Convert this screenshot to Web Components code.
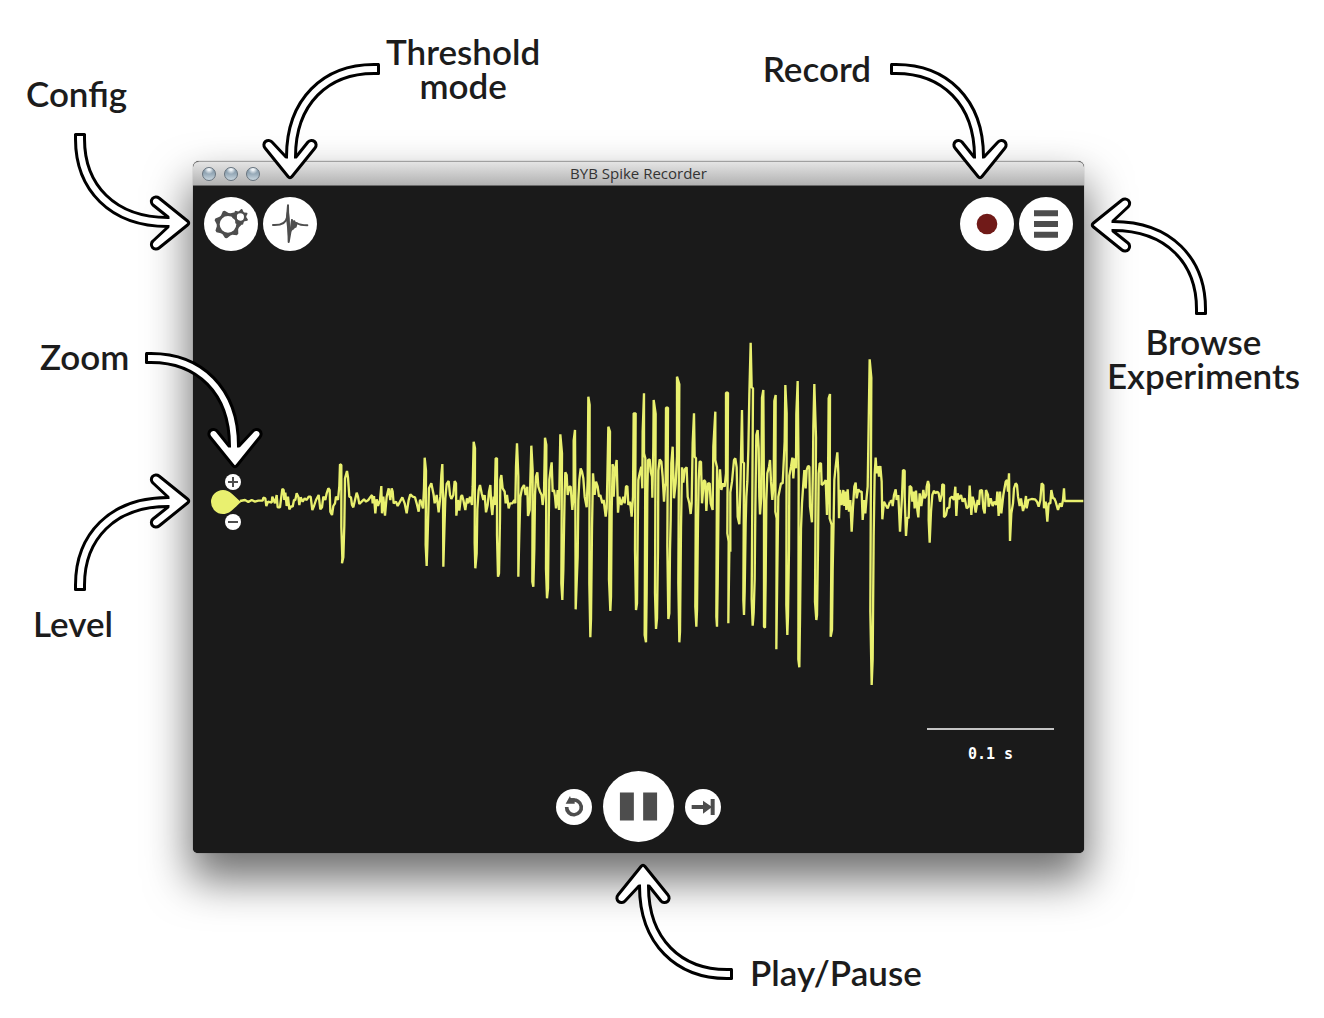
<!DOCTYPE html>
<html lang="en">
<head>
<meta charset="utf-8">
<title>BYB Spike Recorder guide</title>
<style>
  body { margin: 0; background: #fff; }
</style>
</head>
<body>
<recorder-guide></recorder-guide>

<script>
const sheet = (css, html) => {
  const t = document.createElement('template');
  t.innerHTML = `<style>*{box-sizing:border-box}${css}</style>${html}`;
  return t;
};
class Base extends HTMLElement {
  constructor() {
    super();
    this.attachShadow({ mode: 'open' }).append(this.constructor.template.content.cloneNode(true));
  }
}

/* Curved outlined arrow. Base pose: tip down, tail to the upper right. */
class CurveArrow extends Base {
  static template = sheet(`
    :host { display: block; width: 120px; height: 120px; pointer-events: none; }
    svg { display: block; width: 100%; height: 100%; overflow: visible; }
    :host([pose="down-left"]) svg { transform: scaleX(-1); }
    :host([pose="up"]) svg { transform: scaleY(-1); }
    :host([pose="right"]) svg { transform: rotate(-90deg); }
    :host([pose="right-up"]) svg { transform: scaleY(-1) rotate(-90deg); }
    :host([pose="left"]) svg { transform: rotate(90deg); }
  `, `<svg viewBox="-28 -118 120 120" aria-hidden="true" fill="none">
    <path d="M89-110H84C36-110 1-78 1-22" stroke="#000" stroke-width="12"/>
    <path d="M88.500-114.500V-105.500" stroke="#000" stroke-width="3" stroke-linecap="round"/>
    <path d="M-2-2.500-25-31A4.600 4.600 0 0 1-18-37L-4-22H6L18-37A4.600 4.600 0 0 1 25-31L2-2.500Q0 0-2-2.500Z" fill="#fff" stroke="#000" stroke-width="3" stroke-linejoin="round"/>
    <path d="M87-110H84C36-110 1-78 1-22V-12" stroke="#fff" stroke-width="6"/>
  </svg>`);
}
customElements.define('curve-arrow', CurveArrow);

class CalloutLabel extends Base {
  static template = sheet(`
    :host { display: block; font: 600 35px/34px Lato, "Open Sans", sans-serif; color: #1c1c1c; text-align: center; white-space: nowrap; }
  `, `<slot></slot>`);
}
customElements.define('callout-label', CalloutLabel);

class RoundButton extends Base {
  static template = sheet(`
    :host { display: block; width: var(--size, 54px); height: var(--size, 54px); }
    button { display: block; width: 100%; height: 100%; padding: 0; border: 0; border-radius: 50%; background: #fff; color: #4d4d4d; cursor: pointer; }
    ::slotted(svg) { display: block; width: 100%; height: 100%; }
  `, `<button type="button"><slot></slot></button>`);
  connectedCallback() {
    this.shadowRoot.querySelector('button').setAttribute('aria-label', this.getAttribute('label'));
  }
}
customElements.define('round-button', RoundButton);

/* Ring with pointed teeth and a round hole. */
const gear = (cx, cy, outer, inner, hole, teeth, turn) => {
  const at = (r, deg) => {
    const a = deg * Math.PI / 180;
    return `${(cx + r * Math.cos(a)).toFixed(1)} ${(cy + r * Math.sin(a)).toFixed(1)}`;
  };
  const step = 360 / teeth, pts = [];
  for (let i = 0; i < teeth; i++) {
    const a = turn + i * step;
    pts.push(at(outer, a - step * .08), at(outer, a + step * .08), at(inner, a + step * .4), at(inner, a + step * .6));
  }
  return `M${pts.join('L')}ZM${cx - hole} ${cy}a${hole} ${hole} 0 1 0 ${2 * hole} 0a${hole} ${hole} 0 1 0 ${-2 * hole} 0Z`;
};

class LevelHandle extends Base {
  static template = sheet(`
    :host { display: flex; flex-direction: column; align-items: flex-end; width: 30px; }
    round-button { --size: 16px; }
    svg.drop { display: block; width: 30px; height: 24px; }
  `, `
    <round-button label="Zoom in"><svg viewBox="-8 -8 16 16"><path d="M-5 0H5M0-5V5" stroke="currentColor" stroke-width="2"/></svg></round-button>
    <svg class="drop" viewBox="0 0 30 24" role="img" aria-label="Level"><path d="M12 0C19 0 22 5 30 12 22 19 19 24 12 24a12 12 0 0 1 0-24Z" fill="#e9f06f"/></svg>
    <round-button label="Zoom out"><svg viewBox="-8 -8 16 16"><path d="M-5 0H5" stroke="currentColor" stroke-width="2"/></svg></round-button>
  `);
}
customElements.define('level-handle', LevelHandle);

/* Sampled trace, drawn in chunks of three units per screen pixel. */
const TRACE = [
  [240, 400, `0,303 15,300 25,306 35,300 45,305 55,302 68,302 70,293 76,295 79,318 84,305 95,308 97,290 105,310 110,285 113,322 120,322 124,290 127,267 131,270 133,300 136,278 140,318 144,290 148,328 154,318 158,320 162,300 166,300 170,280 175,290 178,315 182,292 188,305 194,295 200,300 206,290 212,290 217,330 222,318 228,300 236,285 241,328 246,322 250,290 256,300 260,280 265,265 269,270 271,335 276,345 280,318 285,310 288,290 294,300 298,258 300,193 304,195 304,380 307,475 306,490 310,472 313,375 315,235 321,213 324,232 328,290 333,292 336,315 340,322 345,300 350,278 354,290 358,312 365,305 372,298 378,305 385,300 392,290 396,285 398,310 402,288 406,340 410,298 414,318 420,300 424,258 426,340 430,290 435,347 440,290 446,265 451,300 455,265 458,275 461,310 468,305 473,318 480,305 487,292 494,310 500,340 506,300 511,283 518,290 525,292 530,310 536,335 540,300`],
  [420, 380, `0,358 5,370 9,385 12,325 14,233 18,272 17,495 20,558 22,500 27,325 34,310 38,330 41,345 44,370 50,345 56,397 61,350 64,285 67,252 69,355 70,560 73,455 76,355 80,312 86,303 90,345 94,357 100,345 104,303 108,310 109,407 114,360 118,392 123,350 126,345 130,360 136,390 141,355 145,370 150,350 156,375 158,320 161,185 165,205 164,488 166,565 170,520 172,388 176,330 180,315 185,340 190,360 194,345 198,397 203,375 207,335 211,315 214,380 217,405 221,350 224,375 227,235 231,235 231,465 234,590 237,580 240,415 241,300 244,285 248,325 254,335 257,370 261,345 266,385 270,370 277,370 283,360 286,370 288,260 291,190 295,290 295,590 298,460 301,352 306,325 312,315 317,345 322,320 324,408 329,390 331,300 334,197 338,272 337,605 340,620 343,505 345,345 348,290 352,277 355,320 360,335 365,345 368,375 372,340 375,173 379,195 378,568 381,655 384,625 386,437 388,300 391,275 395,247 398,335 402,330 405,350 408,385 413,330 417,390 421,163 426,220 424,610 427,660 430,570 434,335 436,277 440,285 443,345 448,320 452,320 457,390 461,345 461,182 465,150 466,350 467,688 473,530 475,360 478,300 482,265 486,275 490,295 494,350 500,382 503,300 505,50 509,75 508,610 511,772 513,718 516,445 519,280 524,345 528,305 533,320 537,350 541,345 547,370 551,360 557,410 560,385 562,300 565,140 570,155 567,598 571,693 573,650 575,395 578,252`],
  [600, 330, `38,405 43,425 41,500 45,420 50,390 54,548 58,500 64,525 70,500 74,520 78,470 82,468 85,525 90,515 95,560 99,500 101,250 107,250 105,660 108,840 111,820 113,620 115,450 119,430 124,410 127,475 128,305 132,190 132,370 136,385 134,915 138,937 140,785 142,490 144,390 149,388 152,425 156,440 157,503 160,350 161,210 167,252 165,790 168,897 171,865 174,662 175,422 179,388 184,395 188,440 192,515 195,470 197,460 198,233 204,233 202,650 205,867 208,850 210,660 212,570 214,400 218,350 222,505 227,460 231,380 231,140 238,163 235,760 238,937 240,905 243,595 246,412 250,458 254,418 260,412 263,500 268,520 272,552 275,520 278,340 282,250 284,380 288,385 286,830 289,890 291,840 294,570 296,450 299,395 303,395 306,520 312,450 316,455 319,543 324,460 329,460 332,520 338,540 340,350 346,245 346,390 351,412 349,860 351,890 353,765 356,480 360,418 364,480 369,460 374,470 378,430 378,188 384,188 382,610 386,635 385,880 388,665 391,665`],
  [730, 330, `1,665 1,487 6,455 12,390 16,385 20,412 23,560 28,583 31,480 33,378 36,240 38,395 42,400 40,810 42,855 44,785 47,580 49,500 52,455 55,360 58,195 62,38 65,172 69,175 65,808 68,887 71,848 74,748 76,540 79,315 83,300 86,355 88,500 90,553 94,500 96,203 100,180 102,515 102,890 105,893 107,750 109,510 112,430 117,410 120,390 123,455 127,510 131,460 133,213 137,195 136,545 140,565 139,958 142,720 145,500 149,480 153,460 158,460 160,420 164,335 166,165 170,250 169,825 172,915 174,858 177,655 178,437 183,410 187,383 190,445 194,385 198,415 199,252 203,153 206,445 205,988 208,1012 210,868 213,595 216,520 220,460 223,420 227,475 230,420 234,408 238,410 240,530 246,577 249,400 250,290 253,162 258,322 255,815 259,870 261,855 264,655 266,430 269,400 273,400 275,465 281,460 287,450 291,555 294,460 296,205 300,192 299,565 305,585 302,920 306,900 308,720 311,565 313,450 317,410 322,367 325,430 327,565 330,480 335,525 340,480 343,528 347,485 349,540 353,478 357,545 361,510 365,605 369,530 373,470 377,458 380,505 385,478 390,485 395,485 398,570 403,510 406,550 410,500 413,470 415,345 419,88 424,143 421,845 425,1065 428,988 431,617 434,432 437,383 440,430 444,408 447,440 451,408 455,455 457,568 462,515 467,525 473,535 480,515`],
  [860, 430, `90,215 96,212 98,228 102,195 107,178 110,210 115,195 120,305 126,200 129,120 134,122 134,200 138,318 142,262 146,265 149,168 154,172 157,215 161,185 164,235 168,182 172,240 175,262 179,190 184,228 190,180 194,205 199,195 200,170 204,153 207,165 206,270 209,338 213,245 217,195 222,182 226,190 232,185 236,190 240,215 245,195 247,163 252,165 252,262 258,255 262,235 268,232 270,205 276,200 282,210 286,170 289,258 293,190 297,208 303,195 308,215 314,205 320,235 326,230 329,167 334,255 338,200 343,220 347,248 353,210 357,225 360,182 366,180 370,235 374,250 378,180 384,195 386,230 392,205 398,228 403,215 409,225 412,185 416,258 420,185 424,250 430,195 437,155 441,150 444,185 447,130 450,333 454,250 459,220 462,175 467,160 471,165 474,200 479,228 483,205 489,243 494,225 498,198 500,235 505,210 515,207 525,208 531,215 536,230 541,210 545,160 550,165 552,235 557,215 562,275 566,220 571,220 574,180 579,205 583,205 587,215 594,240 600,220 605,230 609,210 612,175 614,213 670,213`]
];

class SpikeTrace extends Base {
  static template = sheet(`
    :host { display: block; position: relative; height: 477px; }
    svg.trace { display: block; width: 100%; height: 100%; }
    level-handle { position: absolute; left: 18px; top: 223px; }
  `, `
    <svg class="trace" viewBox="193 251 891 477" preserveAspectRatio="none" role="img" aria-label="Recorded signal" fill="none" stroke="#e9f06f" stroke-linejoin="bevel">
      ${TRACE.map(([x, y, p]) => `<g transform="translate(${x} ${y}) scale(.33333)"><polyline stroke-width="7" points="${p}"/></g>`).join('')}
    </svg>
    <level-handle></level-handle>
  `);
}
customElements.define('spike-trace', SpikeTrace);

class TimeScale extends Base {
  static template = sheet(`
    :host { display: block; width: 127px; height: 43px; border-top: 2px solid #c4c4c4; padding-top: 15px;
      font: bold 15px/18px "DejaVu Sans Mono", "Liberation Mono", monospace; color: #fff; text-align: center; }
  `, `<slot></slot>`);
}
customElements.define('time-scale', TimeScale);

class AppWindow extends Base {
  static template = sheet(`
    :host { display: flex; flex-direction: column; border-radius: 6px 6px 5px 5px; overflow: hidden; background: #1a1a1a;
      box-shadow: 0 24px 44px 3px rgba(0,0,0,.56), 0 0 1px rgba(0,0,0,.6); }
    header { display: grid; grid-template-columns: 1fr auto 1fr; align-items: center; height: 25px; padding: 0 9px;
      background: linear-gradient(#e4e4e4, #b2b2b2); border-top: 1px solid #a0a0a0; border-bottom: 1px solid #6a6a6a; border-radius: 6px 6px 0 0; }
    .lights { display: flex; gap: 8px; }
    .lights button { width: 14px; height: 14px; padding: 0; border: 1px solid #66727d; border-radius: 50%;
      background: radial-gradient(circle at 50% 10%, #eef3f7 0 10%, transparent 40%), linear-gradient(#7e93a3, #98abb9 50%, #c9d6df); }
    h1 { margin: 0; padding-bottom: 2px; font: 400 15px/20px "Open Sans", "Noto Sans", sans-serif; color: #333; }
  `, `
    <header>
      <div class="lights"><button type="button" aria-label="Close"></button><button type="button" aria-label="Minimize"></button><button type="button" aria-label="Zoom window"></button></div>
      <h1><slot name="title"></slot></h1>
    </header>
    <slot></slot>
  `);
}
customElements.define('app-window', AppWindow);

class RecorderView extends Base {
  static template = sheet(`
    :host { display: block; background: #1a1a1a; padding: 11px 0; }
    nav { display: flex; justify-content: space-between; padding: 0 11px; }
    .group { display: flex; gap: 5px; }
    .scale { display: flex; justify-content: flex-end; padding-right: 30px; }
    .controls { display: flex; justify-content: center; align-items: center; gap: 11px; }
    .controls round-button { --size: 36px; }
    .controls round-button.main { --size: 71px; }
  `, `
    <nav>
      <div class="group">
        <round-button label="Config"><svg viewBox="-81 -81 162 162"><path fill="currentColor" fill-rule="evenodd" d="${gear(-9, 1, 42, 34, 25, 7, 201)}"/><path fill="#fff" d="M17-21a11 11 0 1 0 22 0a11 11 0 1 0-22 0Z"/><path fill="currentColor" fill-rule="evenodd" d="${gear(28, -21, 24, 18, 11, 7, 280)}"/></svg></round-button>
        <round-button label="Threshold mode"><svg viewBox="-81 -81 162 162"><path fill="none" stroke="currentColor" stroke-width="6" stroke-linecap="round" stroke-linejoin="round" d="M-51 3C-30 4-12 0-9-20L-6-56-4 54 2 20 6-12 9 14 13-8 17 8 20-3C30 4 40 4 52 4"/><path fill="currentColor" d="M-12-18-6-58-1-18 1 18-4 56-8 18ZM3-14 12-10 20-4 16 12 12 14 8 18 2 24Z"/></svg></round-button>
      </div>
      <div class="group">
        <round-button label="Record"><svg viewBox="-81 -81 162 162"><circle r="31" fill="#701a18"/></svg></round-button>
        <round-button label="Browse experiments"><svg viewBox="-81 -81 162 162"><path fill="currentColor" d="M-36-41h72v18h-72zM-36-9h72V9h-72zM-36 23h72v18h-72z"/></svg></round-button>
      </div>
    </nav>
    <spike-trace></spike-trace>
    <div class="scale"><time-scale>0.1 s</time-scale></div>
    <div class="controls">
      <round-button label="Restart"><svg viewBox="-54 -54 108 108"><path fill="none" stroke="currentColor" stroke-width="11" d="M-22 0A22 22 0 1 0-6-20"/><path fill="currentColor" d="M-25-10-12-33-10-27 2-26V-10Z"/></svg></round-button>
      <round-button class="main" label="Pause"><svg viewBox="-107 -107 214 214"><path fill="currentColor" d="M-56-42h42v84h-42zM14-42h42v84H14z"/></svg></round-button>
      <round-button label="Skip to end"><svg viewBox="-54 -54 108 108"><path fill="currentColor" d="M-34-6H0V-19L23-3V-24H35V24H23V3L0 20V6H-34Z"/></svg></round-button>
    </div>
  `);
}
customElements.define('recorder-view', RecorderView);

/* The app window sits in the page's flow; callouts are pinned around it. */
class RecorderGuide extends Base {
  static template = sheet(`
    :host { display: block; position: relative; overflow: hidden; padding: 161px 240px 165px 193px; }
    curve-arrow, callout-label { position: absolute; }
  `, `
    <app-window><span slot="title">BYB Spike Recorder</span><recorder-view></recorder-view></app-window>

    <callout-label style="left:26px;top:76px">Config</callout-label>
    <curve-arrow pose="right" style="left:72px;top:131px"></curve-arrow>

    <callout-label style="left:386px;top:34px">Threshold<br>mode</callout-label>
    <curve-arrow pose="down" style="left:262px;top:61px"></curve-arrow>

    <callout-label style="right:453px;top:51px">Record</callout-label>
    <curve-arrow pose="down-left" style="right:316px;top:61px"></curve-arrow>

    <callout-label style="right:24px;top:324px">Browse<br>Experiments</callout-label>
    <curve-arrow pose="left" style="right:115px;top:197px"></curve-arrow>

    <callout-label style="left:40px;top:339px">Zoom</callout-label>
    <curve-arrow pose="down-left" style="left:143px;top:350px"></curve-arrow>

    <callout-label style="left:33px;top:606px">Level</callout-label>
    <curve-arrow pose="right-up" style="left:72px;top:473px"></curve-arrow>

    <callout-label style="left:calc(50% + 88px);top:955px">Play/Pause</callout-label>
    <curve-arrow pose="up" style="left:calc(50% - 47px);top:862px"></curve-arrow>
  `);
}
customElements.define('recorder-guide', RecorderGuide);
</script>
</body>
</html>
